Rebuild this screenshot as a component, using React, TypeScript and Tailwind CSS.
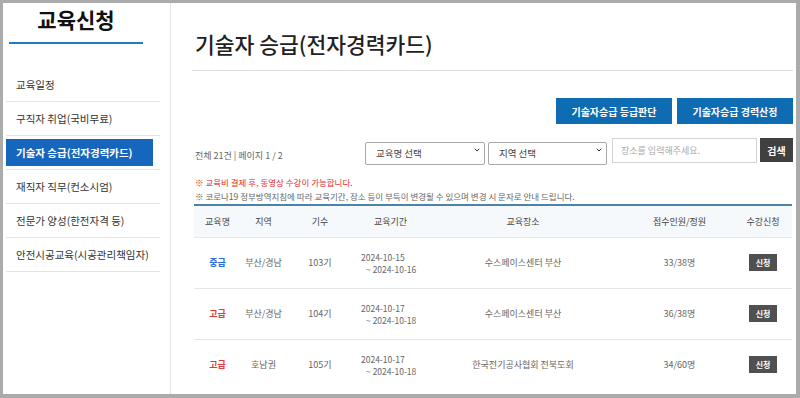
import { ChevronDown } from 'lucide-react';

const menus = [
   '교육일정',
   '구직자 취업(국비무료)',
   '기술자 승급(전자경력카드)',
   '재직자 직무(컨소시엄)',
   '전문가 양성(한전자격 등)',
   '안전시공교육(시공관리책임자)',
];

const courses = [
   { level: '중급', tone: 'text-[#2d6fd2]', region: '부산/경남', round: '103기', start: '2024-10-15', end: '2024-10-16', place: '수스페이스센터 부산', seats: '33/38명' },
   { level: '고급', tone: 'text-[#e23b3b]', region: '부산/경남', round: '104기', start: '2024-10-17', end: '2024-10-18', place: '수스페이스센터 부산', seats: '36/38명' },
   { level: '고급', tone: 'text-[#e23b3b]', region: '호남권', round: '105기', start: '2024-10-17', end: '2024-10-18', place: '한국전기공사협회 전북도회', seats: '34/60명' },
];

function SelectBox({ label, width }: { label: string; width: string }) {
   return (
      <div className={`relative h-[23px] ${width}`}>
         <select className="h-full w-full appearance-none rounded-[2px] border border-[#a9a9a9] bg-white pl-[10px] text-[9.5px] text-[#444] outline-none">
            <option>{label}</option>
         </select>
         <ChevronDown className="pointer-events-none absolute right-[4px] top-[8px] size-[8px] text-[#333]" strokeWidth={3} />
      </div>
   );
}

export default function App() {
   return (
      <div className="h-[398px] w-[800px] bg-[#ababab] pb-[4px] pl-[3px] pr-[4px] pt-[3px] font-['Noto_Sans_CJK_KR','Noto_Sans',sans-serif]">
         <div className="flex h-full bg-white">
            <aside className="w-[168px] shrink-0 border-r border-[#e3e3e3]">
               <div className="ml-[6px] w-[134px] pt-[1px]">
                  <h1 className="text-center text-[21px] leading-[30px] font-bold text-[#111]">교육신청</h1>
                  <div className="mt-[8px] h-[2px] bg-[#1f7ac6]" />
               </div>

               <ul className="ml-[3px] mt-[24px] w-[154px]">
                  {menus.map((menu, i) => (
                     <li key={menu} className="border-b border-[#e4e4e4] py-[3px]">
                        <span
                           className={
                              i === 2
                                 ? 'mr-[7px] flex h-[27px] items-center whitespace-nowrap bg-[#1766bd] px-[10px] text-[10.5px] font-bold text-white'
                                 : 'flex h-[27px] items-center whitespace-nowrap px-[10px] text-[10.5px] text-[#333]'
                           }
                        >
                           {menu}
                        </span>
                     </li>
                  ))}
               </ul>
            </aside>

            <main className="flex-1 pl-[21px] pr-[3px]">
               <h2 className="mt-[26px] border-b border-[#dcdcdc] pb-[11px] pl-[3px] text-[21.5px] leading-[30px] font-medium text-[#222]">
                  기술자 승급(전자경력카드)
               </h2>

               <div className="mt-[27px] flex justify-end gap-[5px]">
                  <button className="h-[26px] w-[116px] bg-[#0e6cb2] text-[10px] font-bold text-white">기술자승급 등급판단</button>
                  <button className="h-[26px] w-[116px] bg-[#0e6cb2] text-[10px] font-bold text-white">기술자승급 경력산정</button>
               </div>

               <div className="mt-[14px] flex items-end">
                  <p className="mb-[1px] pl-[3px] text-[9px] text-[#666]">전체 21건 | 페이지 1 / 2</p>
                  <div className="ml-auto flex items-start gap-[3px]">
                     <SelectBox label="교육명 선택" width="w-[120px]" />
                     <SelectBox label="지역 선택" width="w-[119px]" />
                     <input
                        className="ml-[2px] h-[25px] w-[145px] border border-[#d4d4d4] pl-[8px] text-[9px] placeholder:text-[#aaa] outline-none"
                        placeholder="장소를 입력해주세요."
                     />
                     <button className="h-[24px] w-[33px] bg-[#404040] text-[10px] font-bold text-white">검색</button>
                  </div>
               </div>

               <div className="mt-[12px] pl-[3px] text-[8.5px] leading-[14px]">
                  <p className="text-[#e82c2c]">※ 교육비 결제 후, 동영상 수강이 가능합니다.</p>
                  <p className="text-[#666]">※ 코로나19 정부방역지침에 따라 교육기간, 장소 등이 부득이 변경될 수 있으며 변경 시 문자로 안내 드립니다.</p>
               </div>

               <table className="ml-[2px] mt-[1px] w-[598px] table-fixed border-t-2 border-[#4b84a6] text-[9px] text-[#666]">
                  <colgroup>
                     <col className="w-[47px]" />
                     <col className="w-[45px]" />
                     <col className="w-[68px]" />
                     <col className="w-[73px]" />
                     <col className="w-[192px]" />
                     <col className="w-[121px]" />
                     <col className="w-[52px]" />
                  </colgroup>
                  <thead>
                     <tr className="h-[32px] border-b border-[#e6eaee] bg-[#f5f9fc] text-[#444]">
                        <th className="font-normal">교육명</th>
                        <th className="font-normal">지역</th>
                        <th className="font-normal">기수</th>
                        <th className="font-normal">교육기간</th>
                        <th className="font-normal">교육장소</th>
                        <th className="font-normal">접수인원/정원</th>
                        <th className="pr-[6px] font-normal">수강신청</th>
                     </tr>
                  </thead>
                  <tbody>
                     {courses.map((c) => (
                        <tr key={c.round} className="h-[51px] border-b border-[#e6e6e6] last:border-b-0">
                           <td className={`text-center font-bold ${c.tone}`}>{c.level}</td>
                           <td className="text-center">{c.region}</td>
                           <td className="text-center">{c.round}</td>
                           <td className="pl-[7px] text-[8.5px] leading-[12px]">
                              {c.start}
                              <br />
                              <span className="pl-[5px]">~ {c.end}</span>
                           </td>
                           <td className="text-center">{c.place}</td>
                           <td className="text-center">{c.seats}</td>
                           <td className="pr-[6px] text-center">
                              <span className="inline-block h-[17px] w-[28px] bg-[#505050] text-[8px] leading-[17px] font-bold text-white">신청</span>
                           </td>
                        </tr>
                     ))}
                  </tbody>
               </table>
            </main>
         </div>
      </div>
   );
}
